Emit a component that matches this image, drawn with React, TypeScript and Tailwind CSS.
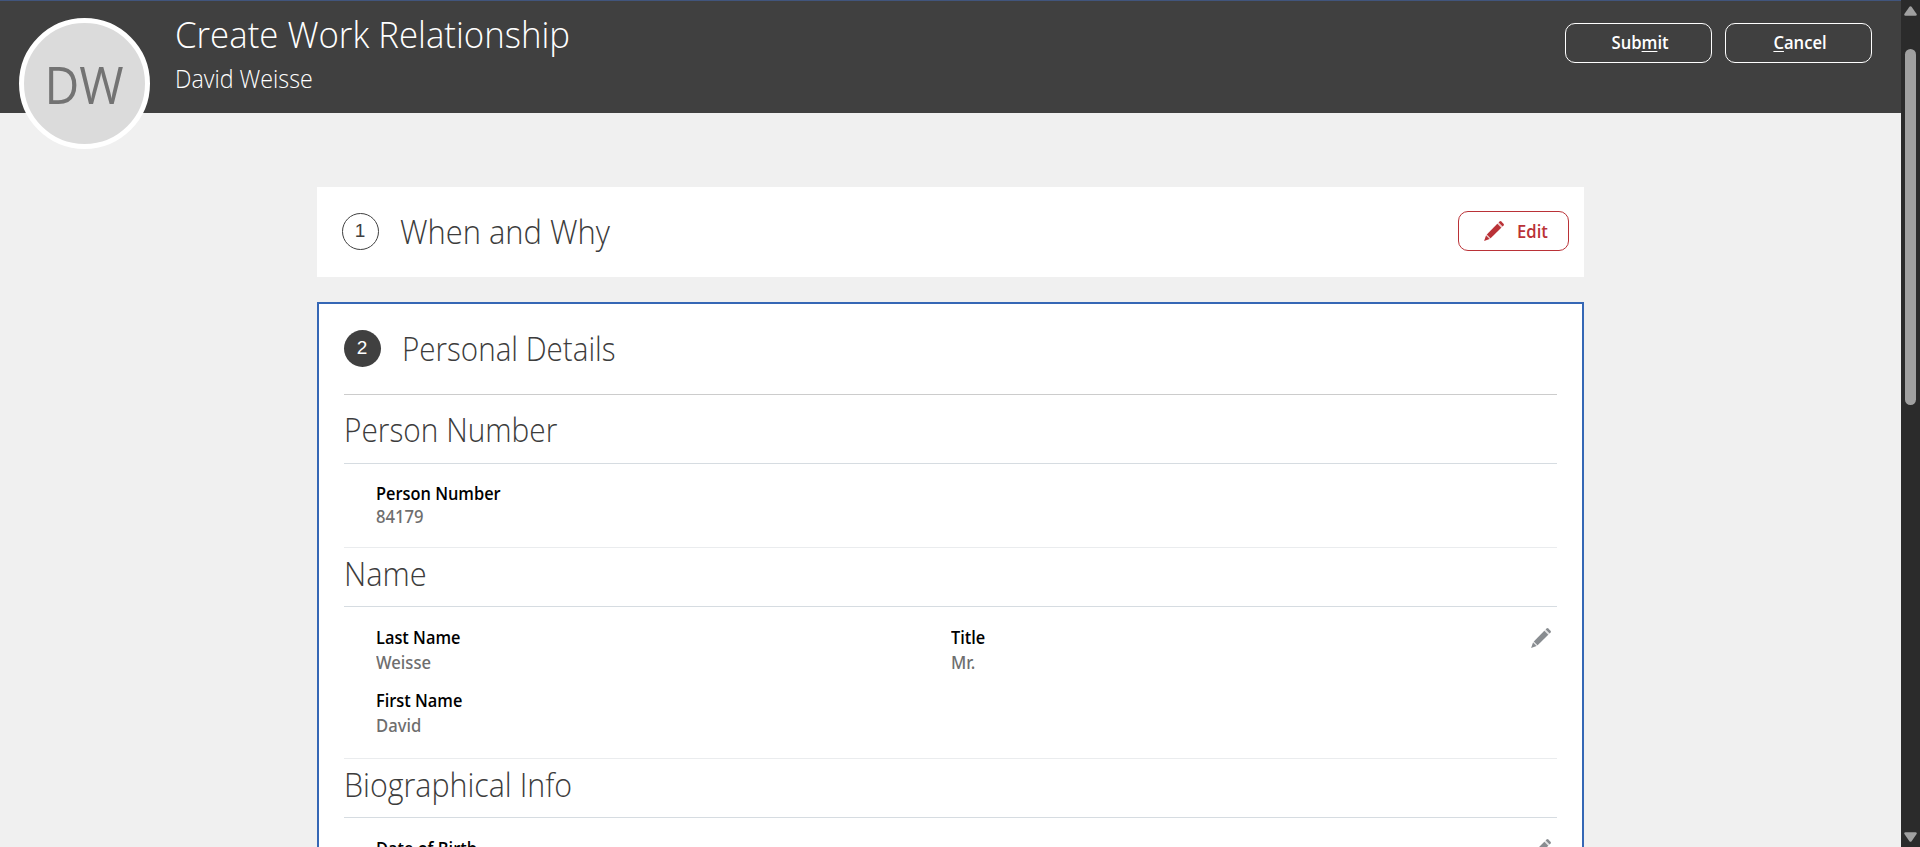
import type { ReactNode } from "react";

function Pencil({ className }: { className: string }) {
  return (
    <svg viewBox="0 0 20 20" className={className} fill="currentColor" aria-hidden="true">
      <path d="M14.6 1.4 15.6.4Q16.4-.3 17.3.5L19.5 2.7Q20.3 3.6 19.6 4.4L18.6 5.4Z" />
      <path d="M13.3 2.7 17.3 6.7 6.6 17.2 2.8 13.4Z" />
      <path d="M2 14.4 5.6 18 .1 19.9Z" />
      <path d="M13.3 2.7 14.6 1.4 18.6 5.4 17.3 6.7ZM2.8 13.4 6.6 17.2 5.6 18 2 14.4Z" opacity=".25" />
    </svg>
  );
}

function StepTitle({ children, stretch = "scale-x-[0.883]" }: { children: ReactNode; stretch?: string }) {
  return (
    <h2 className={`origin-left text-[33.5px] leading-10 font-light whitespace-nowrap text-[#3c3c3c] ${stretch}`}>
      {children}
    </h2>
  );
}

function SectionHeading({ title, className, stretch }: { title: string; className: string; stretch?: string }) {
  return (
    <div className={`flex shrink-0 border-b border-[#d6dce1] ${className}`}>
      <StepTitle stretch={stretch}>{title}</StepTitle>
    </div>
  );
}

function Field({ label, value, className = "gap-[3px]" }: { label: string; value?: string; className?: string }) {
  return (
    <div className={`flex flex-col ${className}`}>
      <dt className="origin-left scale-x-[0.935] text-[17.5px] leading-[22px] font-semibold whitespace-nowrap text-black">
        {label}
      </dt>
      {value && (
        <dd className="origin-left scale-x-[0.95] font-['Noto_Sans',sans-serif] text-[17.5px] leading-[22px] font-medium whitespace-nowrap text-[#6e6e6e]">
          {value}
        </dd>
      )}
    </div>
  );
}

function HeaderButton({ children }: { children: ReactNode }) {
  return (
    <button className="flex h-10 w-[147px] items-center justify-center rounded-[10px] border border-white pb-0.5 pl-[3px] text-[17.5px] font-semibold text-white">
      <span className="block scale-x-[0.95] leading-[22px]">{children}</span>
    </button>
  );
}

export default function App() {
  return (
    <div className="flex h-[847px] w-full overflow-hidden bg-[#f0f0f0] font-['Open_Sans','Noto_Sans',sans-serif]">
      <div className="flex min-w-0 flex-1 flex-col">
        <header className="flex h-[113px] shrink-0 items-start border-t border-[#41557d] bg-[#404040] pl-[19px] pr-[29px]">
          <div className="z-10 mt-[17px] flex size-[131px] shrink-0 items-center justify-center rounded-full border-5 border-white bg-[#dbdbdb]">
            <span className="scale-x-[0.94] pt-[2px] text-[51px] leading-none text-[#737373]">DW</span>
          </div>
          <div className="ml-[25px] flex flex-1 flex-col text-white">
            <h1 className="mt-[10px] origin-left scale-x-[0.94] text-[37px] leading-[46px] font-light whitespace-nowrap">
              Create Work Relationship
            </h1>
            <p className="mt-[5px] origin-left scale-x-[0.93] text-[25px] leading-8 font-light whitespace-nowrap">
              David Weisse
            </p>
          </div>
          <div className="mt-[22px] flex gap-[13px]">
            <HeaderButton>
              Sub<span className="underline underline-offset-2">m</span>it
            </HeaderButton>
            <HeaderButton>
              <span className="underline underline-offset-2">C</span>ancel
            </HeaderButton>
          </div>
        </header>

        <main className="ml-[317px] flex w-[1267px] flex-1 flex-col pt-[74px]">
          <section className="flex h-[90px] shrink-0 items-start bg-white pr-[15px] pl-[25px]">
            <span className="mt-[26px] flex size-[37px] items-center justify-center rounded-full border border-[#404040] pr-px font-['Liberation_Sans',Arial,sans-serif] text-[19px] text-[#404040]">
              1
            </span>
            <div className="mt-6 ml-[21px] flex flex-1">
              <StepTitle stretch="scale-x-[0.922]">When and Why</StepTitle>
            </div>
            <button className="mt-6 flex h-10 w-[111px] items-center rounded-[10px] border border-[#ba3237] pl-[25px] text-[17.5px] font-semibold text-[#ba3237]">
              <Pencil className="size-5" />
              <span className="mb-px ml-[13px] origin-left scale-x-[0.95] leading-[22px]">Edit</span>
            </button>
          </section>

          <section className="mt-[25px] flex min-h-0 flex-1 flex-col overflow-hidden border-x-2 border-t-2 border-[#3567b5] bg-white px-[25px]">
            <div className="flex h-[91px] shrink-0 items-start border-b border-[#cccccc] pt-[26px]">
              <span className="flex size-[37px] shrink-0 items-center justify-center rounded-full bg-[#404040] pr-px font-['Liberation_Sans',Arial,sans-serif] text-[19px] text-white">
                2
              </span>
              <div className="-mt-0.5 ml-[21px]">
                <StepTitle>Personal Details</StepTitle>
              </div>
            </div>

            <SectionHeading title="Person Number" className="h-[69px] pt-[14px]" stretch="scale-x-[0.89]" />
            <dl className="h-[84px] shrink-0 border-b border-[#eaecee] pt-[18px] pl-8">
              <Field label="Person Number" value="84179" className="gap-px" />
            </dl>

            <SectionHeading title="Name" className="h-[59px] pt-[5px]" stretch="scale-x-[0.92]" />
            <dl className="flex h-[152px] shrink-0 items-start border-b border-[#eaecee] pt-[19px] pr-1.5 pl-8">
              <div className="flex w-[575px] flex-col gap-4">
                <Field label="Last Name" value="Weisse" />
                <Field label="First Name" value="David" />
              </div>
              <div className="flex-1">
                <Field label="Title" value="Mr." />
              </div>
              <Pencil className="mt-0.5 size-5 text-[#888c90]" />
            </dl>

            <SectionHeading title="Biographical Info" className="h-[59px] pt-[5px]" stretch="scale-x-[0.907]" />
            <dl className="flex shrink-0 items-start pt-[19px] pr-1.5 pl-8">
              <div className="flex-1">
                <Field label="Date of Birth" />
              </div>
              <Pencil className="mt-0.5 size-5 text-[#888c90]" />
            </dl>
          </section>
        </main>
      </div>

      <div className="flex w-[19px] shrink-0 flex-col items-center bg-[#2b2b2b]">
        <svg viewBox="0 0 13 10" className="mt-1.5 h-2.5 w-[13px] fill-[#a0a0a0]">
          <path d="M5.4.8q1.1-1.3 2.2 0l5 7.2q.7 1.8-1.2 1.8H1.6Q-.3 9.8.4 8Z" />
        </svg>
        <div className="mt-[33px] h-[356px] w-[11px] rounded-full bg-[#a0a0a0]" />
        <svg viewBox="0 0 13 10" className="mt-auto mb-[5px] h-2.5 w-[13px] fill-[#a0a0a0]">
          <path d="M5.4 9.2q1.1 1.3 2.2 0l5-7.2q.7-1.8-1.2-1.8H1.6Q-.3.2.4 2Z" />
        </svg>
      </div>
    </div>
  );
}
